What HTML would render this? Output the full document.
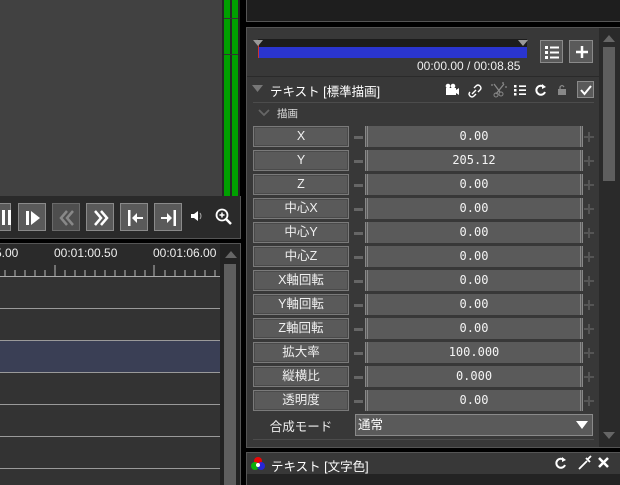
<!DOCTYPE html>
<html><head><meta charset="utf-8"><style>
*{margin:0;padding:0;box-sizing:border-box}
body{width:620px;height:485px;background:#000;position:relative;overflow:hidden;font-family:"Liberation Sans","Noto Sans CJK JP",sans-serif;color:#fff}
.a{position:absolute}
.lbl{position:absolute;left:253px;width:96px;height:21px;background:#5a5a5a;border:1px solid #7a7a7a;box-shadow:inset 0 0 0 1px #4a4a4a;font-size:12.5px;text-align:center;line-height:19px;color:#f0f0f0}
.val{position:absolute;left:365px;width:218px;height:21px;background:#5a5a5a;border-left:3px double #888;border-right:3px double #888;font-family:"DejaVu Sans Mono","Liberation Mono",monospace;font-size:12px;text-align:center;line-height:21px;color:#f4f4f4}
.mn{position:absolute;left:354px;width:9px;height:3px;background:#666}
.pl{position:absolute;left:584px;width:10px;height:10px}
.pl:before{content:"";position:absolute;left:0;top:4px;width:10px;height:2px;background:#555}
.pl:after{content:"";position:absolute;left:4px;top:0;width:2px;height:10px;background:#555}
.btn{position:absolute;top:203px;width:28px;height:28px;background:#5a5a5a;border:1px solid #8a8a8a}
.hl{position:absolute;left:0;width:220px;height:1px;background:#9a9a9a}
</style></head><body>
<div class="a" style="left:0;top:0;width:222px;height:196px;background:#414141"></div>
<div class="a" style="left:222px;top:0;width:18px;height:196px;background:#262626"></div>
<div class="a" style="left:224px;top:0;width:6px;height:196px;background:#00a000"></div>
<div class="a" style="left:232px;top:0;width:6px;height:196px;background:#00a000"></div>
<div class="a" style="left:224px;top:18px;width:14px;height:1px;background:#333"></div>
<div class="a" style="left:224px;top:54px;width:14px;height:1px;background:#333"></div>
<div class="a" style="left:0;top:196px;width:241px;height:43px;background:#2a2a2a;border-right:1px solid #555;border-bottom:1px solid #555"></div>
<div class="btn" style="left:-17px"><div class="a" style="left:18px;top:6px;width:3px;height:15px;background:#fff"></div><div class="a" style="left:24px;top:6px;width:3px;height:15px;background:#fff"></div></div>
<div class="btn" style="left:18px"><svg class="a" style="left:4px;top:4px" width="20" height="20"><rect x="3" y="3" width="3" height="14" fill="#fff"/><path d="M8 3 L17 10 L8 17Z" fill="#fff"/></svg></div>
<div class="btn" style="left:52px;background:#4e4e4e;border-color:#6a6a6a"><svg class="a" style="left:4px;top:4px" width="20" height="20"><path d="M10 3 L4 10 L10 17 M16 3 L10 10 L16 17" stroke="#888" stroke-width="2.5" fill="none"/></svg></div>
<div class="btn" style="left:86px"><svg class="a" style="left:4px;top:4px" width="20" height="20"><path d="M4 3 L10 10 L4 17 M10 3 L16 10 L10 17" stroke="#fff" stroke-width="2.5" fill="none"/></svg></div>
<div class="btn" style="left:120px"><svg class="a" style="left:4px;top:4px" width="20" height="20"><rect x="3" y="2" width="2.5" height="16" fill="#fff"/><path d="M7 10 L12 5 L12 9 L18 9 L18 11 L12 11 L12 15Z" fill="#fff"/></svg></div>
<div class="btn" style="left:154px"><svg class="a" style="left:4px;top:4px" width="20" height="20"><rect x="14.5" y="2" width="2.5" height="16" fill="#fff"/><path d="M13 10 L8 5 L8 9 L2 9 L2 11 L8 11 L8 15Z" fill="#fff"/></svg></div>
<svg class="a" style="left:189px;top:208px" width="16" height="16"><path d="M2 6 H5 L9 3 V13 L5 10 H2Z" fill="#fff"/><path d="M11 5 Q13 8 11 11" stroke="#aaa" fill="none"/></svg>
<svg class="a" style="left:214px;top:207px" width="20" height="20"><circle cx="8" cy="8" r="5.5" stroke="#fff" stroke-width="1.8" fill="none"/><path d="M12 12 L17 17" stroke="#fff" stroke-width="2.5"/><path d="M5.5 8 H10.5 M8 5.5 V10.5" stroke="#fff" stroke-width="1.5"/></svg>
<div class="a" style="left:0;top:243px;width:241px;height:242px;background:#222;border-right:1px solid #555;border-top:1px solid #555"></div>
<div class="a" style="left:0;top:244px;width:220px;height:241px;background:#333"></div>
<div class="a" style="left:0;top:244px;width:220px;height:32px;background:#2a2a2a"></div>
<div class="a" style="left:-5px;top:246px;font-size:12px;color:#eee">5.00</div>
<div class="a" style="left:54px;top:246px;font-size:12px;color:#eee">00:01:00.50</div>
<div class="a" style="left:153px;top:246px;font-size:12px;color:#eee">00:01:06.00</div>
<svg class="a" style="left:0;top:265px" width="220" height="13">
<path d="M5 5V11M15 5V11M25 5V11M35 5V11M45 5V11M65 5V11M75 5V11M85 5V11M95 5V11M105 5V11M115 5V11M125 5V11M135 5V11M145 5V11M165 5V11M175 5V11M185 5V11M195 5V11M205 5V11M215 5V11M55 0V11M154 0V11" stroke="#bbb"/>
<rect x="0" y="11" width="220" height="1" fill="#aaa"/></svg>
<div class="a" style="left:0;top:341px;width:220px;height:31px;background:#3a3f55"></div>
<div class="hl" style="top:308px"></div><div class="hl" style="top:340px"></div><div class="hl" style="top:372px"></div><div class="hl" style="top:404px"></div><div class="hl" style="top:436px"></div><div class="hl" style="top:468px"></div>
<div class="a" style="left:220px;top:244px;width:20px;height:241px;background:#222"></div>
<svg class="a" style="left:224px;top:249px" width="14" height="10"><path d="M1 9 L7 2 L13 9Z" fill="#666"/></svg>
<div class="a" style="left:224px;top:264px;width:12px;height:221px;background:#5e5e5e"></div>
<div class="a" style="left:246px;top:-2px;width:376px;height:24px;background:#1e1e1e;border:1px solid #555"></div>
<div class="a" style="left:246px;top:27px;width:376px;height:421px;background:#383838;border:1px solid #555"></div>
<div class="a" style="left:599px;top:28px;width:21px;height:419px;background:#2a2a2a"></div>
<svg class="a" style="left:602px;top:33px" width="14" height="10"><path d="M1 9 L7 2 L13 9Z" fill="#666"/></svg>
<div class="a" style="left:603px;top:47px;width:12px;height:134px;background:#5e5e5e"></div>
<svg class="a" style="left:602px;top:431px" width="14" height="10"><path d="M1 1 L7 8 L13 1Z" fill="#666"/></svg>
<div class="a" style="left:258px;top:39px;width:269px;height:8px;background:#1c1c1c"></div>
<div class="a" style="left:258px;top:47px;width:269px;height:11px;background:#2a35d0"></div>
<div class="a" style="left:258px;top:40px;width:1px;height:18px;background:#c33"></div>
<svg class="a" style="left:253px;top:39px" width="280" height="9"><path d="M0 1 H10 L5 7Z M265 1 H275 L270 7Z" fill="#999"/></svg>
<div class="a" style="left:540px;top:40px;width:23px;height:23px;background:#5a5a5a;border:1px solid #8a8a8a"><svg class="a" style="left:2px;top:2px" width="18" height="18"><path d="M2 3h3v3h-3zM2 8h3v3h-3zM2 13h3v3h-3z" fill="#fff"/><path d="M7 4.5h9M7 9.5h9M7 14.5h9" stroke="#fff" stroke-width="2"/></svg></div>
<div class="a" style="left:569px;top:40px;width:24px;height:23px;background:#5a5a5a;border:1px solid #8a8a8a"><svg class="a" style="left:3px;top:2px" width="18" height="18"><path d="M9 3V15M3 9H15" stroke="#fff" stroke-width="2.5"/></svg></div>
<div class="a" style="left:417px;top:59px;font-size:12px;color:#eee">00:00.00 / 00:08.85</div>
<div class="a" style="left:247px;top:76px;width:352px;height:1px;background:#2a2a2a"></div>
<svg class="a" style="left:252px;top:84px" width="12" height="10"><path d="M0 1 H11 L5.5 8Z" fill="#777"/></svg>
<div class="a" style="left:270px;top:81px;font-size:12.5px;color:#fff">テキスト [標準描画]</div>
<svg class="a" style="left:444px;top:82px" width="135" height="16">
<rect x="2" y="6" width="10" height="7" fill="#fff"/><circle cx="4" cy="4" r="2.3" fill="#fff"/><circle cx="9" cy="4" r="2.3" fill="#fff"/><path d="M12 8 L15 6 V13 L12 11Z" fill="#fff"/>
<path d="M28 12 L32 8 M26 10 Q24 12 26 14 Q28 16 30 14 L32 12 M30 6 L32 4 Q34 2 36 4 Q38 6 36 8 L34 10" stroke="#fff" stroke-width="1.4" fill="none"/>
<path d="M50 2 L56 10 M60 2 L52 12 M47 3h2M58 1h2M61 5h2" stroke="#888" stroke-width="1.3"/><circle cx="52" cy="13" r="2" stroke="#888" fill="none"/><circle cx="57" cy="12" r="2" stroke="#888" fill="none"/>
<path d="M70 3h2.5v2.5h-2.5zM70 7h2.5v2.5h-2.5zM70 11h2.5v2.5h-2.5z" fill="#fff"/><path d="M75 4.2h7M75 8.2h7M75 12.2h7" stroke="#fff" stroke-width="1.6"/>
<path d="M100 5 A4.5 4.5 0 1 0 101 10" stroke="#fff" stroke-width="2" fill="none"/><path d="M98 2 L102 5 L98 7Z" fill="#fff"/>
<rect x="114" y="7" width="8" height="6" fill="#888"/><path d="M116 7 V5 Q118 2 120 5" stroke="#888" stroke-width="1.3" fill="none"/>
</svg>
<div class="a" style="left:577px;top:81px;width:17px;height:17px;background:#5a5a5a;border:1px solid #8a8a8a"><svg class="a" style="left:1px;top:1px" width="14" height="14"><path d="M2 7 L5.5 11 L12 3" stroke="#fff" stroke-width="2" fill="none"/></svg></div>
<div class="a" style="left:253px;top:102px;width:341px;height:1px;background:#4c4c4c"></div>
<svg class="a" style="left:258px;top:109px" width="12" height="8"><path d="M1 1 L6 6 L11 1" stroke="#666" stroke-width="1.8" fill="none"/></svg>
<div class="a" style="left:277px;top:106px;font-size:10.5px;color:#ddd">描画</div>

<div class="lbl" style="top:126px">X</div><div class="mn" style="top:136px"></div><div class="val" style="top:126px">0.00</div><div class="pl" style="top:132px"></div>
<div class="lbl" style="top:150px">Y</div><div class="mn" style="top:160px"></div><div class="val" style="top:150px">205.12</div><div class="pl" style="top:156px"></div>
<div class="lbl" style="top:174px">Z</div><div class="mn" style="top:184px"></div><div class="val" style="top:174px">0.00</div><div class="pl" style="top:180px"></div>
<div class="lbl" style="top:198px">中心X</div><div class="mn" style="top:208px"></div><div class="val" style="top:198px">0.00</div><div class="pl" style="top:204px"></div>
<div class="lbl" style="top:222px">中心Y</div><div class="mn" style="top:232px"></div><div class="val" style="top:222px">0.00</div><div class="pl" style="top:228px"></div>
<div class="lbl" style="top:246px">中心Z</div><div class="mn" style="top:256px"></div><div class="val" style="top:246px">0.00</div><div class="pl" style="top:252px"></div>
<div class="lbl" style="top:270px">X軸回転</div><div class="mn" style="top:280px"></div><div class="val" style="top:270px">0.00</div><div class="pl" style="top:276px"></div>
<div class="lbl" style="top:294px">Y軸回転</div><div class="mn" style="top:304px"></div><div class="val" style="top:294px">0.00</div><div class="pl" style="top:300px"></div>
<div class="lbl" style="top:318px">Z軸回転</div><div class="mn" style="top:328px"></div><div class="val" style="top:318px">0.00</div><div class="pl" style="top:324px"></div>
<div class="lbl" style="top:342px">拡大率</div><div class="mn" style="top:352px"></div><div class="val" style="top:342px">100.000</div><div class="pl" style="top:348px"></div>
<div class="lbl" style="top:366px">縦横比</div><div class="mn" style="top:376px"></div><div class="val" style="top:366px">0.000</div><div class="pl" style="top:372px"></div>
<div class="lbl" style="top:390px">透明度</div><div class="mn" style="top:400px"></div><div class="val" style="top:390px">0.00</div><div class="pl" style="top:396px"></div>

<div class="a" style="left:253px;top:416px;width:96px;text-align:center;font-size:12.5px;color:#eee">合成モード</div>
<div class="a" style="left:355px;top:414px;width:238px;height:22px;background:#5a5a5a;border:1px solid #8a8a8a;font-size:12.5px;line-height:20px;padding-left:2px;color:#fff">通常<svg class="a" style="left:220px;top:5px" width="12" height="10"><path d="M0 1 H12 L6 9Z" fill="#fff"/></svg></div>
<div class="a" style="left:253px;top:439px;width:341px;height:1px;background:#4c4c4c"></div>
<div class="a" style="left:246px;top:452px;width:376px;height:33px;background:#383838;border:1px solid #555"></div>
<div class="a" style="left:247px;top:474px;width:373px;height:11px;background:#232323"></div>
<svg class="a" style="left:250px;top:456px" width="16" height="16"><circle cx="8" cy="5" r="4" fill="#f00" opacity=".9"/><circle cx="5" cy="10" r="4" fill="#0c0" opacity=".8"/><circle cx="11" cy="10" r="4" fill="#22f" opacity=".8"/><circle cx="8" cy="9" r="2" fill="#fff"/></svg>
<div class="a" style="left:271px;top:456px;font-size:12.5px;color:#fff">テキスト [文字色]</div>
<svg class="a" style="left:554px;top:455px" width="62" height="16">
<path d="M10 5 A4.5 4.5 0 1 0 11 10" stroke="#fff" stroke-width="2" fill="none"/><path d="M8 2 L12 5 L8 7Z" fill="#fff"/>
<path d="M25 14 L33 6 M32 3 L36 7 M34 4 L37 1" stroke="#fff" stroke-width="1.8" fill="none"/>
<path d="M45 3 L54 12 M54 3 L45 12" stroke="#fff" stroke-width="2.5"/></svg>
</body></html>
